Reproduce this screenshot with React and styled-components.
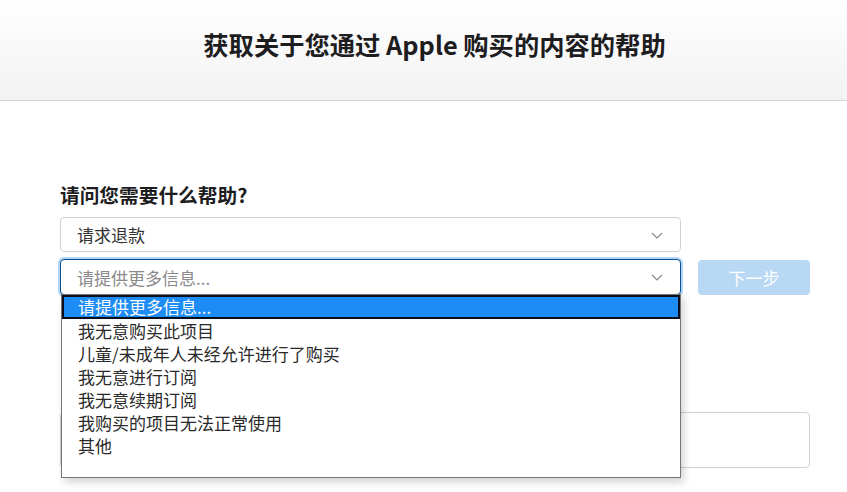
import React from "react";
import styled, { createGlobalStyle } from "styled-components";

const Global = createGlobalStyle`
  html, body { margin: 0; padding: 0; background: #fff; }
  body { font-family: "Noto Sans CJK SC", "Noto Sans", sans-serif; color: #333; min-height: 492px; }
`;

const Header = styled.header`
  height: 100px;
  border-bottom: 1px solid #d6d6d6;
  background: linear-gradient(to bottom, #ffffff 0%, #f2f2f2 100%);
  display: flex;
  align-items: center;
  justify-content: center;
  padding-left: 22px;
`;

const Title = styled.h1`
  margin: 0;
  font-size: 25.3px;
  font-weight: 700;
  color: #1d1d1f;
  letter-spacing: 0;
  transform: translateY(-6px);
`;

const Main = styled.main`
  padding: 80px 0 40px 60px;
  width: 750px;
`;

const Label = styled.h2`
  margin: 0 0 8px;
  font-size: 19.7px;
  font-weight: 700;
  color: #1d1d1f;
  line-height: 28px;
`;

const Grid = styled.div`
  display: grid;
  grid-template-columns: 621px 112px;
  column-gap: 17px;
  row-gap: 8px;
`;

const SelectBox = styled.div`
  position: relative;
  box-sizing: border-box;
  height: ${(p) => (p.$focus ? "36px" : "35px")};
  margin-top: ${(p) => (p.$focus ? "-1px" : "0")};
  border: 1px solid ${(p) => (p.$focus ? "#0a4f8f" : "#d2d2d2")};
  border-radius: 4px;
  background: #fff;
  box-shadow: ${(p) => (p.$focus ? "0 0 0 2px #b5d6f3" : "none")};
  display: flex;
  align-items: center;
  padding: 0 16px;
  font-size: 17px;
  color: ${(p) => (p.$placeholder ? "#8a8a8a" : "#333")};
`;

const Chevron = styled.svg`
  position: absolute;
  right: 17px;
  top: 50%;
  margin-top: -3px;
  width: 12px;
  height: 7px;
`;

const NextButton = styled.button`
  box-sizing: border-box;
  height: 35px;
  border: none;
  border-radius: 4px;
  background: #b8d8f4;
  color: #fff;
  font-family: inherit;
  font-size: 17px;
  padding: 0;
`;

const Dropdown = styled.ul`
  position: absolute;
  left: 0;
  top: 34px;
  width: 620px;
  height: 184px;
  box-sizing: border-box;
  margin: 0;
  padding: 0;
  list-style: none;
  background: #fff;
  border: 1px solid #767676;
  box-shadow: 3px 4px 8px rgba(0, 0, 0, 0.18);
  z-index: 10;
`;

const Option = styled.li`
  box-sizing: border-box;
  height: ${(p) => (p.$active ? "24px" : "23px")};
  line-height: ${(p) => (p.$active ? "20px" : "23px")};
  padding-left: ${(p) => (p.$active ? "14px" : "16px")};
  font-size: 17px;
  color: ${(p) => (p.$active ? "#fff" : "#2a2a2a")};
  background: ${(p) => (p.$active ? "#1e8cf5" : "transparent")};
  border: ${(p) => (p.$active ? "2px solid #0b0f1c" : "none")};
  white-space: nowrap;
`;

const TextArea = styled.div`
  margin-top: 117px;
  width: 750px;
  height: 56px;
  box-sizing: border-box;
  border: 1px solid #d2d2d2;
  border-radius: 4px;
`;

const ChevronIcon = () => (
  <Chevron viewBox="0 0 12 7">
    <path d="M1 1l5 5 5-5" fill="none" stroke="#888" strokeWidth="1.2" />
  </Chevron>
);

const options = [
  "请提供更多信息...",
  "我无意购买此项目",
  "儿童/未成年人未经允许进行了购买",
  "我无意进行订阅",
  "我无意续期订阅",
  "我购买的项目无法正常使用",
  "其他",
];

export default function App() {
  return (
    <>
      <Global />
      <Header>
        <Title>获取关于您通过 Apple 购买的内容的帮助</Title>
      </Header>
      <Main>
        <Label>请问您需要什么帮助?</Label>
        <Grid>
          <SelectBox>
            请求退款
            <ChevronIcon />
          </SelectBox>
          <div />
          <SelectBox $focus $placeholder>
            请提供更多信息...
            <ChevronIcon />
            <Dropdown>
              {options.map((o, i) => (
                <Option key={o} $active={i === 0}>
                  {o}
                </Option>
              ))}
            </Dropdown>
          </SelectBox>
          <NextButton>下一步</NextButton>
        </Grid>
        <TextArea />
      </Main>
    </>
  );
}
